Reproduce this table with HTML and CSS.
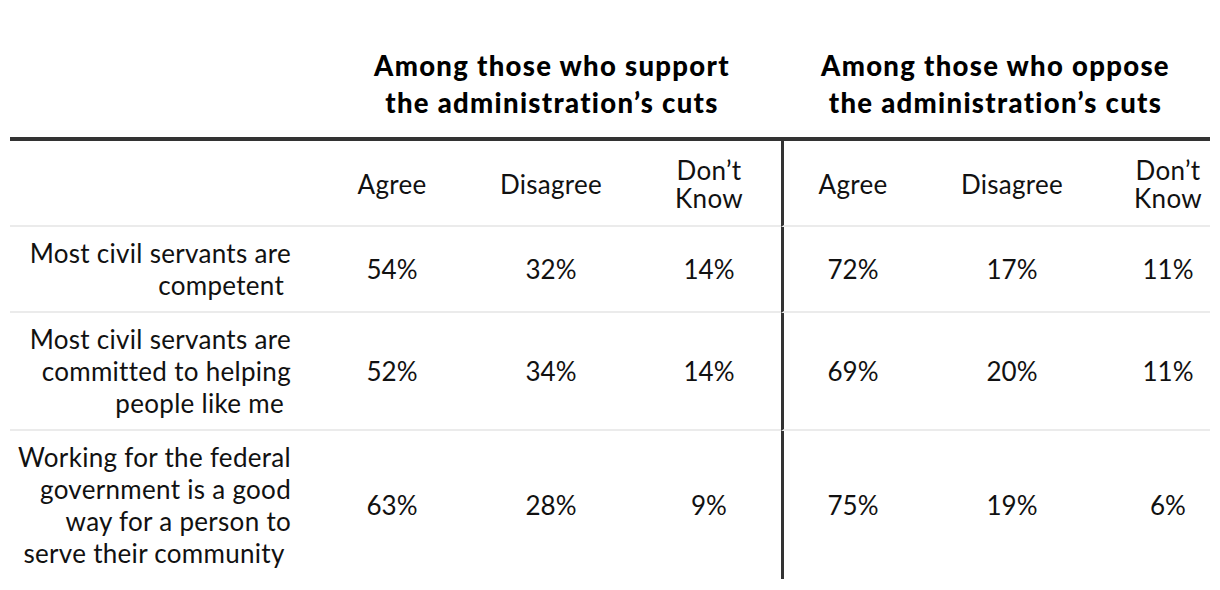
FILE: index.html
```html
<!DOCTYPE html>
<html lang="en">
<head>
<meta charset="utf-8">
<title>Views of civil servants</title>
<link rel="stylesheet" href="styles.css">
</head>
<body>
<div class="wrap">
  <div class="titles">
    <div class="spacer"></div>
    <div class="group-title g1">Among those who support<br>the administration’s cuts</div>
    <div class="group-title g2">Among those who oppose<br>the administration’s cuts</div>
  </div>
  <div class="table">
    <div class="cell head label"></div>
    <div class="cell head c1">Agree</div>
    <div class="cell head c2">Disagree</div>
    <div class="cell head c3">Don’t<br>Know</div>
    <div class="cell head c4">Agree</div>
    <div class="cell head c5">Disagree</div>
    <div class="cell head c6">Don’t<br>Know</div>

    <div class="cell label">Most civil servants are<br>competent&nbsp;</div>
    <div class="cell num c1">54%</div>
    <div class="cell num c2">32%</div>
    <div class="cell num c3">14%</div>
    <div class="cell num c4">72%</div>
    <div class="cell num c5">17%</div>
    <div class="cell num c6">11%</div>

    <div class="cell label">Most civil servants are<br>committed to helping<br>people like me&nbsp;</div>
    <div class="cell num c1">52%</div>
    <div class="cell num c2">34%</div>
    <div class="cell num c3">14%</div>
    <div class="cell num c4">69%</div>
    <div class="cell num c5">20%</div>
    <div class="cell num c6">11%</div>

    <div class="cell last label">Working for the federal<br>government is a good<br>way for a person to<br>serve their community&nbsp;</div>
    <div class="cell last num c1">63%</div>
    <div class="cell last num c2">28%</div>
    <div class="cell last num c3">9%</div>
    <div class="cell last num c4">75%</div>
    <div class="cell last num c5">19%</div>
    <div class="cell last num c6">6%</div>
  </div>
</div>
</body>
</html>
```
FILE: styles.css
```css
html, body {
  margin: 0;
  padding: 0;
  background: #fff;
}
body {
  font-family: Lato, "Noto Sans", "Liberation Sans", sans-serif;
  color: #111;
}
.wrap {
  width: 1200px;
  padding: 47px 10px 0;
}
.titles {
  display: grid;
  grid-template-columns: 302px 469px 429px;
  padding-bottom: 16px;
  border-bottom: 4px solid #333;
}
.group-title {
  font-weight: 900;
  font-size: 27.5px;
  line-height: 37px;
  letter-spacing: 1.3px;
  text-align: center;
  color: #000;
}
.g1 {
  padding-left: 11px;
}
.table {
  display: grid;
  grid-template-columns: 302px 160px 158px 151px 141px 180px 108px;
  font-size: 26px;
  font-weight: 400;
  letter-spacing: 0.3px;
}
.cell {
  display: flex;
  align-items: center;
  justify-content: center;
  text-align: center;
  line-height: 32px;
  padding-top: 10px;
  padding-bottom: 10px;
  border-bottom: 2px solid #ebebeb;
}
.cell.last {
  border-bottom: none;
}
.cell.head {
  line-height: 28px;
  padding-top: 15px;
  padding-bottom: 13px;
  height: 56px;
  box-sizing: content-box;
}
.num {
  letter-spacing: 0;
}
.label {
  justify-content: flex-end;
  text-align: right;
  padding-right: 21px;
}
.c3 {
  padding-left: 7px;
}
.c4 {
  border-left: 3px solid #333;
}
.c6 {
  padding-left: 24px;
}
```
